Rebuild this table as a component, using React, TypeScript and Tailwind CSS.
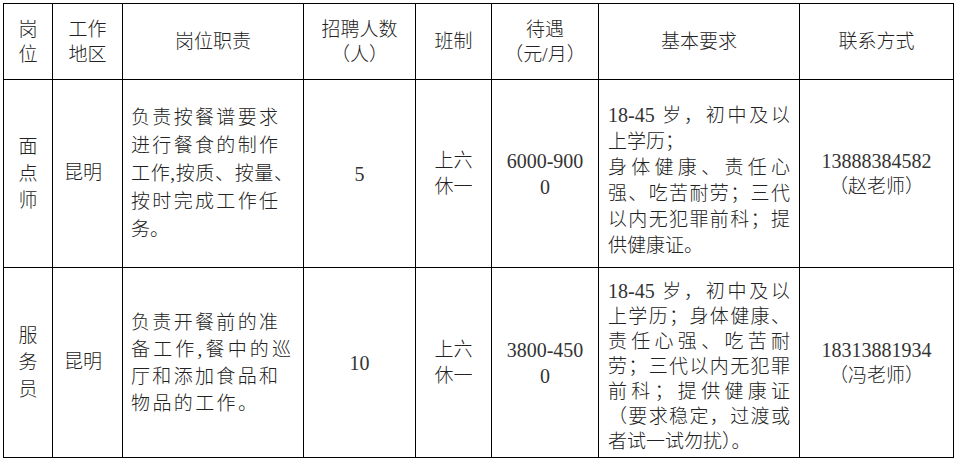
import clsx from "clsx";
import { ReactNode } from "react";

// one line of a cell, spread over the given width (Word-style distributed text)
function J({ w, children }: { w?: string; children: ReactNode }) {
  return (
    <div className={clsx("whitespace-nowrap [text-align-last:justify]", w)}>
      {children}
    </div>
  );
}

function Plain({ children }: { children: ReactNode }) {
  return <div className="whitespace-nowrap">{children}</div>;
}

const td = "border border-black align-middle p-0";
const num = "text-[20px] text-[#333]";

export default function App() {
  return (
    <div className="min-h-screen bg-white pl-[3px] pt-[3px] text-[19px] text-[#222] font-light font-['Liberation_Serif','Noto_Sans_CJK_SC',serif]">
      <table className="table-fixed border-collapse w-[950px]">
        <colgroup>
          <col className="w-[49px]" />
          <col className="w-[70px]" />
          <col className="w-[181px]" />
          <col className="w-[112px]" />
          <col className="w-[76px]" />
          <col className="w-[107px]" />
          <col className="w-[201px]" />
          <col className="w-[154px]" />
        </colgroup>
        <thead>
          <tr className="h-[76px] text-center leading-[25px]">
            <th className={clsx(td, "font-light")}>
              岗<br />位
            </th>
            <th className={clsx(td, "font-light")}>
              工作<br />地区
            </th>
            <th className={clsx(td, "font-light")}>岗位职责</th>
            <th className={clsx(td, "font-light")}>
              招聘人数<br />（人）
            </th>
            <th className={clsx(td, "font-light")}>班制</th>
            <th className={clsx(td, "font-light")}>
              待遇<br />（元/月）
            </th>
            <th className={clsx(td, "font-light")}>基本要求</th>
            <th className={clsx(td, "font-light")}>联系方式</th>
          </tr>
        </thead>
        <tbody>
          <tr className="h-[188px]">
            <td className={clsx(td, "text-center leading-[27px]")}>
              面<br />点<br />师
            </td>
            <td className={clsx(td, "pl-[11px]")}>昆明</td>
            <td className={clsx(td, "pl-[8px] leading-[28px]")}>
              <J w="w-[147px]">负责按餐谱要求</J>
              <J w="w-[147px]">进行餐食的制作</J>
              <J w="w-[162px]">工作,按质、按量、</J>
              <J w="w-[147px]">按时完成工作任</J>
              <Plain>务。</Plain>
            </td>
            <td className={clsx(td, "text-center", num)}>5</td>
            <td className={clsx(td, "text-center leading-[26px]")}>
              上六<br />休一
            </td>
            <td className={clsx(td, "text-center leading-[26px]", num)}>
              6000-900<br />0
            </td>
            <td className={clsx(td, "px-[9px] pt-[13px] leading-[26px]")}>
              <J>
                <span className={num}>18-45</span> 岁，初中及以
              </J>
              <Plain>上学历；</Plain>
              <J>身体健康、责任心</J>
              <J>强、吃苦耐劳；三代</J>
              <J>以内无犯罪前科；提</J>
              <Plain>供健康证。</Plain>
            </td>
            <td className={clsx(td, "text-center leading-[26px]")}>
              <div className={num}>13888384582</div>
              <div>（赵老师）</div>
            </td>
          </tr>
          <tr className="h-[190px]">
            <td className={clsx(td, "text-center leading-[27px]")}>
              服<br />务<br />员
            </td>
            <td className={clsx(td, "pl-[11px]")}>昆明</td>
            <td className={clsx(td, "pl-[8px] leading-[27px]")}>
              <J w="w-[147px]">负责开餐前的准</J>
              <J w="w-[160px]">备工作,餐中的巡</J>
              <J w="w-[147px]">厅和添加食品和</J>
              <J w="w-[126px]">物品的工作。</J>
            </td>
            <td className={clsx(td, "text-center", num)}>10</td>
            <td className={clsx(td, "text-center leading-[26px]")}>
              上六<br />休一
            </td>
            <td className={clsx(td, "text-center leading-[26px]", num)}>
              3800-450<br />0
            </td>
            <td className={clsx(td, "px-[9px] pt-[8px] leading-[25px]")}>
              <J>
                <span className={num}>18-45</span> 岁，初中及以
              </J>
              <J>上学历；身体健康、</J>
              <J>责任心强、吃苦耐</J>
              <J>劳；三代以内无犯罪</J>
              <J>前科；提供健康证</J>
              <J>（要求稳定，过渡或</J>
              <Plain>者试一试勿扰）。</Plain>
            </td>
            <td className={clsx(td, "text-center leading-[26px]")}>
              <div className={num}>18313881934</div>
              <div>（冯老师）</div>
            </td>
          </tr>
        </tbody>
      </table>
    </div>
  );
}
